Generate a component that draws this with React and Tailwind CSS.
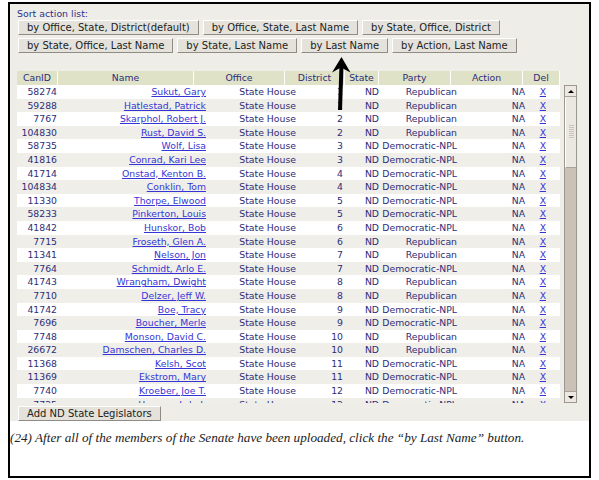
import React from 'react';

const DEM = 'Democratic-NPL';
const REP = 'Republican';

const rows = [
  ['58274', 'Sukut, Gary', '1', REP],
  ['59288', 'Hatlestad, Patrick', '1', REP],
  ['7767', 'Skarphol, Robert J.', '2', REP],
  ['104830', 'Rust, David S.', '2', REP],
  ['58735', 'Wolf, Lisa', '3', DEM],
  ['41816', 'Conrad, Kari Lee', '3', DEM],
  ['41714', 'Onstad, Kenton B.', '4', DEM],
  ['104834', 'Conklin, Tom', '4', DEM],
  ['11330', 'Thorpe, Elwood', '5', DEM],
  ['58233', 'Pinkerton, Louis', '5', DEM],
  ['41842', 'Hunskor, Bob', '6', DEM],
  ['7715', 'Froseth, Glen A.', '6', REP],
  ['11341', 'Nelson, Jon', '7', REP],
  ['7764', 'Schmidt, Arlo E.', '7', DEM],
  ['41743', 'Wrangham, Dwight', '8', REP],
  ['7710', 'Delzer, Jeff W.', '8', REP],
  ['41742', 'Boe, Tracy', '9', DEM],
  ['7696', 'Boucher, Merle', '9', DEM],
  ['7748', 'Monson, David C.', '10', REP],
  ['26672', 'Damschen, Charles D.', '10', REP],
  ['11368', 'Kelsh, Scot', '11', DEM],
  ['11369', 'Ekstrom, Mary', '11', DEM],
  ['7740', 'Kroeber, Joe T.', '12', DEM],
  ['7725', 'Hanson, Lyle J.', '12', DEM],
];

const headers = [
  ['CanID', 'w-[41px]'],
  ['Name', 'w-[136px]'],
  ['Office', 'w-[91px]'],
  ['District', 'w-[60px]'],
  ['State', 'w-[34px]'],
  ['Party', 'w-[72px]'],
  ['Action', 'w-[72px]'],
  ['Del', 'w-[37px]'],
];

const Btn = ({ children }) => (
  <button className="h-[15px] px-[8px] bg-[#e4e2db] border border-t-white border-l-white border-r-[#8e8c85] border-b-[#8e8c85] text-[10px] leading-[13px] text-[#222] whitespace-nowrap">
    {children}
  </button>
);

const Arrow = () => (
  <svg className="absolute left-[328px] top-[54px]" width="26" height="58" viewBox="0 0 26 58">
    <polygon points="13.5,3 4,18.5 13,13.5 22.5,18.5" fill="#000" />
    <polygon points="11.5,10 15.5,10 14,56 10,56" fill="#000" />
  </svg>
);

const ScrollBar = () => (
  <div className="w-[13px] h-full border border-[#9b988f] bg-[#cac2b7] flex flex-col">
    <div className="h-[11px] bg-[#ede9e2] border-b border-[#a8a49b] flex items-center justify-center">
      <div className="w-0 h-0 border-l-[3px] border-r-[3px] border-b-[3px] border-l-transparent border-r-transparent border-b-black" />
    </div>
    <div className="h-[71px] bg-[#ebe8e1] border-b border-[#a8a49b] border-l border-l-white flex items-center justify-center">
      <div className="w-[5px] h-[14px] bg-[repeating-linear-gradient(to_bottom,#c9c5bc_0px,#c9c5bc_1px,transparent_1px,transparent_2px)]" />
    </div>
    <div className="flex-1" />
    <div className="h-[11px] bg-[#ede9e2] border-t border-[#a8a49b] flex items-center justify-center">
      <div className="w-0 h-0 border-l-[3px] border-r-[3px] border-t-[3px] border-l-transparent border-r-transparent border-t-black" />
    </div>
  </div>
);

export default function App() {
  return (
    <div className="relative w-[599px] h-[480px] bg-white pt-[2px] pl-[8px] font-['DejaVu_Sans',sans-serif]">
      <div className="w-[583px] h-[476px] border-2 border-black flex flex-col">
        {/* Panel */}
        <div className="h-[417px] bg-[#eeede7] pt-[3px] pl-[7px] flex flex-col">
          <div className="h-[13px] leading-[13px] text-[9.4px] text-[#2f2f8a]">Sort action list:</div>
          <div className="pl-[1px] flex flex-col gap-[3px]">
            <div className="flex gap-[4px]">
              <Btn>by Office, State, District(default)</Btn>
              <Btn>by Office, State, Last Name</Btn>
              <Btn>by State, Office, District</Btn>
            </div>
            <div className="flex gap-[4px]">
              <Btn>by State, Office, Last Name</Btn>
              <Btn>by State, Last Name</Btn>
              <Btn>by Last Name</Btn>
              <Btn>by Action, Last Name</Btn>
            </div>
          </div>

          {/* Table header */}
          <div className="mt-[18px] flex w-[543px] h-[14px] bg-[#dfe2c6] text-[9.3px] leading-[14px] text-[#2d2d78]">
            {headers.map(([h, w]) => (
              <div key={h} className={`${w} text-center border-r border-white`}>{h}</div>
            ))}
          </div>

          {/* Table body + scrollbar */}
          <div className="flex gap-[4px] h-[318px]">
            <div className="w-[543px] h-full overflow-hidden bg-white text-[9.3px] text-[#2d2d78]">
              {rows.map((r, i) => (
                <div key={r[0]} className={`flex h-[13.6px] leading-[13.6px] whitespace-nowrap ${i % 2 ? 'bg-[#efeee9]' : 'bg-white'}`}>
                  <div className="w-[42px] text-right pr-[2px]">{r[0]}</div>
                  <div className="w-[149px] text-right pr-[2px]">
                    <a href="#" className="text-[#3535d6] underline">{r[1]}</a>
                  </div>
                  <div className="w-[90px] text-right pr-[2px]">State House</div>
                  <div className="w-[47px] text-right pr-[2px]">{r[2]}</div>
                  <div className="w-[36px] text-right pr-[2px]">ND</div>
                  <div className="w-[78px] text-right pr-[2px]">{r[3]}</div>
                  <div className="w-[68px] text-right pr-[2px]">NA</div>
                  <div className="w-[21px] text-right pr-[2px]">
                    <a href="#" className="text-[#3535d6] underline">X</a>
                  </div>
                </div>
              ))}
            </div>
            <ScrollBar />
          </div>

          <div className="mt-[3px] pl-[1px] flex">
            <Btn>Add ND State Legislators</Btn>
          </div>
        </div>

        {/* Caption */}
        <div className="flex-1 bg-white pt-[9px] font-['Liberation_Serif',serif] italic text-[13.2px] leading-[15px] text-[#222] whitespace-nowrap">
          (24) After all of the members of the Senate have been uploaded, click the “by Last Name” button.
        </div>
      </div>
      <Arrow />
    </div>
  );
}
